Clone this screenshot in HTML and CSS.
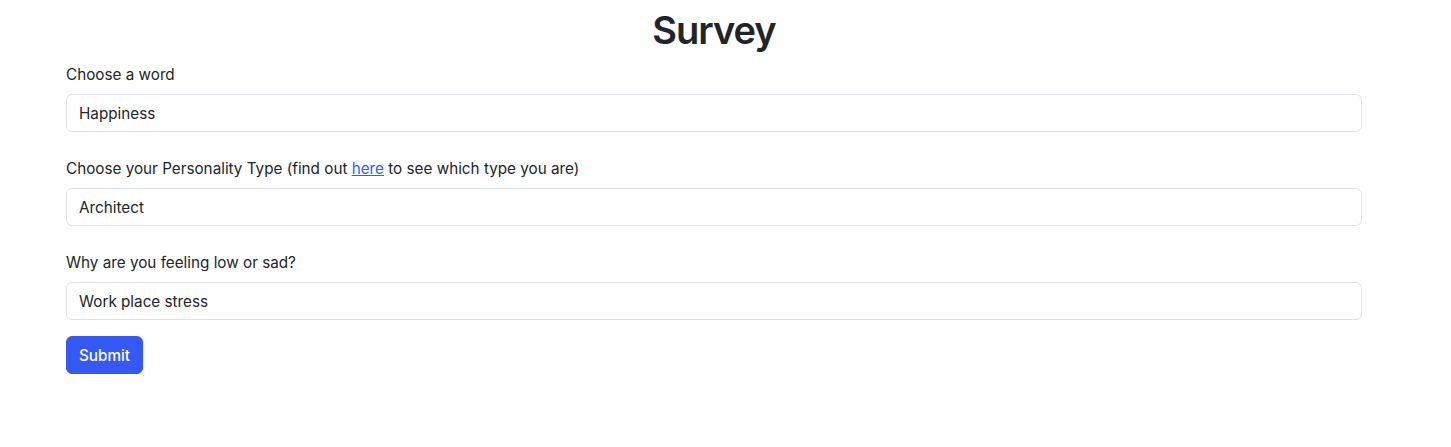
FILE: index.html
```html
<!DOCTYPE html>
<html lang="en">
<head>
<meta charset="utf-8">
<title>Survey</title>
<link rel="stylesheet" href="styles.css">
</head>
<body>
<div class="container">
  <h1 class="title">Survey</h1>
  <form class="form">
    <div class="field">
      <label class="label" for="word">Choose a word</label>
      <input class="input" id="word" type="text" value="Happiness">
    </div>
    <div class="field">
      <label class="label" for="ptype">Choose your Personality Type (find out <a class="link" href="#">here</a> to see which type you are)</label>
      <input class="input" id="ptype" type="text" value="Architect">
    </div>
    <div class="field last">
      <label class="label" for="why">Why are you feeling low or sad?</label>
      <input class="input" id="why" type="text" value="Work place stress">
    </div>
    <button class="btn" type="button">Submit</button>
  </form>
</div>
</body>
</html>
```
FILE: styles.css
```css
* { box-sizing: border-box; }
html, body { margin: 0; padding: 0; background: #fff; }
body {
  font-family: Inter, "Liberation Sans", Arial, sans-serif;
  font-size: 15.25px;
  line-height: 24px;
  color: #212529;
}
.container {
  width: 1296px;
  margin-left: 66px;
  padding-top: 6px;
}
.title {
  margin: 0 0 8px;
  font-size: 38px;
  line-height: 48px;
  font-weight: 600;
  letter-spacing: -1px;
  text-align: center;
  color: #212529;
}
.form { display: flex; flex-direction: column; }
.field { display: flex; flex-direction: column; margin-bottom: 24px; }
.field.last { margin-bottom: 16px; }
.label { display: block; padding-top: 1px; margin-bottom: 7px; }
.link { color: #2f5ef0; text-decoration: underline; }
.input {
  display: block;
  width: 100%;
  height: 38px;
  padding: 6px 12px;
  font: inherit;
  color: #212529;
  background: #fff;
  border: 1px solid #dee2e6;
  border-radius: 6px;
  outline: none;
}
.btn {
  align-self: flex-start;
  width: 77px;
  height: 38px;
  padding: 7px 0 5px;
  font: inherit;
  font-weight: 500;
  color: #fff;
  background: #3459f6;
  border: 1px solid #3459f6;
  border-radius: 6px;
  cursor: pointer;
}
```
